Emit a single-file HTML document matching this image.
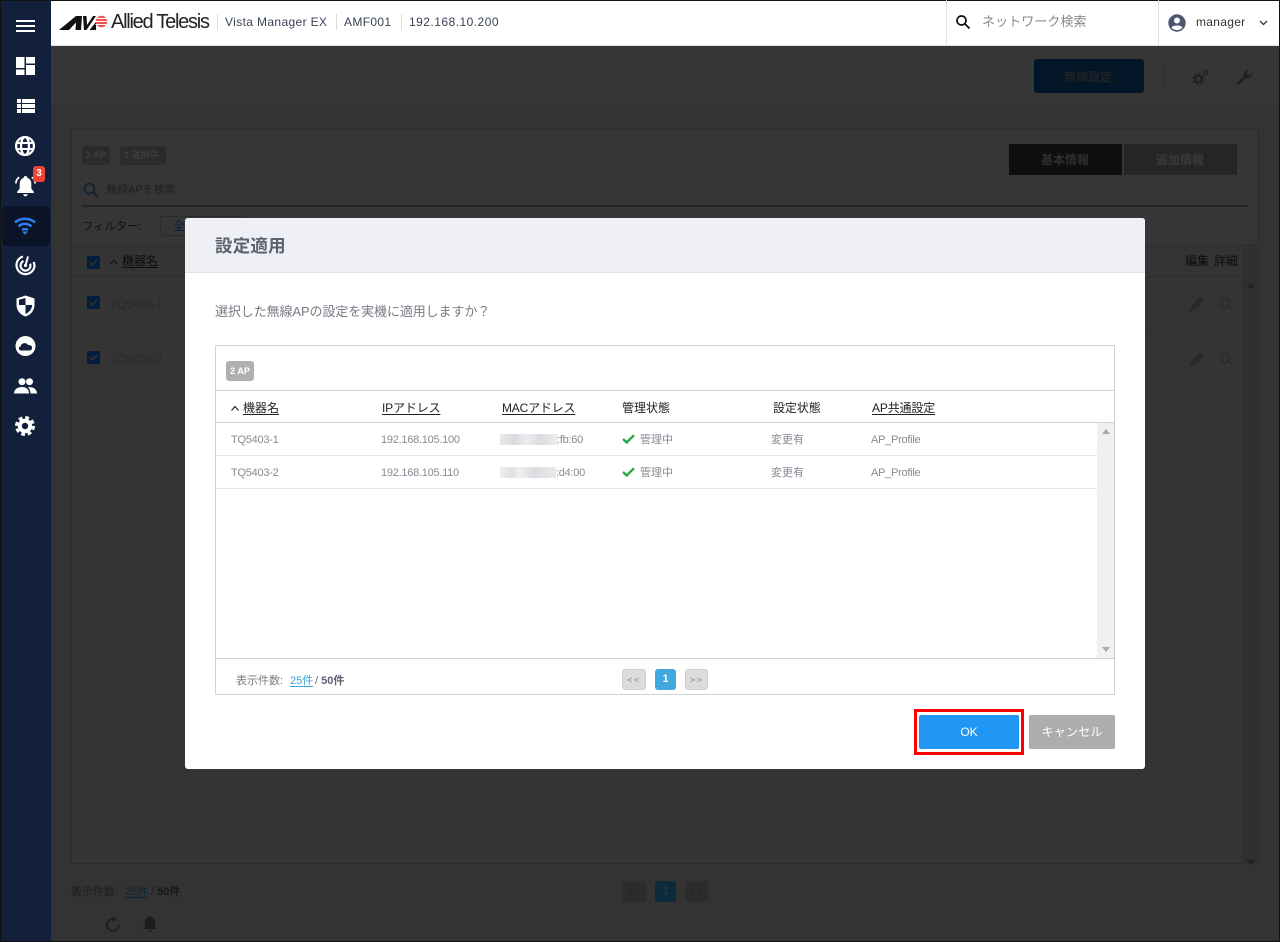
<!DOCTYPE html>
<html lang="ja"><head><meta charset="utf-8"><title>Vista Manager EX</title>
<style>
*{box-sizing:border-box}
html,body{margin:0;padding:0;width:1280px;height:942px;overflow:hidden;background:#333}
body{font-family:"Liberation Sans","Noto Sans CJK JP",sans-serif;position:relative;color:#222}
.a{position:absolute;white-space:nowrap}
.t{position:absolute;white-space:nowrap;line-height:16px}
svg{position:absolute;display:block;overflow:visible}
u{text-underline-offset:2px}
.d{font-size:11px;color:#858a94;letter-spacing:-.26px}
.c{font-size:11px;color:#858a94}
</style></head><body>

<!-- dark base -->
<div class="a" style="left:51px;top:46px;width:1229px;height:896px;background:#333"></div>
<div class="a" style="left:51px;top:46px;width:1229px;height:60px;background:#363636;border-bottom:1px solid #303030"></div>
<!-- background panel -->
<div class="a" style="left:71px;top:129px;width:1188px;height:735px;background:#343434;border:1px solid #2c2c2c"></div>
<div class="a" style="left:72px;top:130px;width:1186px;height:114px;background:#363636"></div>
<div class="a" style="left:72px;top:244px;width:1186px;height:143px;background:#343434;border-top:1px solid #2e2e2e"></div>
<div class="a" style="left:1243px;top:245px;width:16px;height:619px;background:#303030;border-left:1px solid #2c2c2c"></div>
<div class="a" style="left:72px;top:276px;width:1170px;height:1px;background:#2c2c2c"></div>
<div class="a" style="left:82px;top:331px;width:1150px;height:1px;background:#303030"></div>
<div class="a" style="left:82px;top:386px;width:1150px;height:1px;background:#313131"></div>
<div class="a" style="left:1034px;top:59px;width:110px;height:34px;background:#021628;border-radius:3px"></div>
<div class="t" style="left:1064px;top:69px;font-size:12px;color:#222;font-weight:700">無線設定</div>
<div class="a" style="left:1164px;top:59px;width:1px;height:34px;background:#303030"></div>
<svg style="left:1192px;top:68px" width="18" height="18" viewBox="0 0 18 18"><circle cx="6.500" cy="11" r="3.300" fill="none" stroke="#222" stroke-width="2.400"/><circle cx="6.500" cy="11" r="5.300" fill="none" stroke="#222" stroke-width="1.800" stroke-dasharray="2 2.160"/><circle cx="13.500" cy="4.500" r="2" fill="none" stroke="#222" stroke-width="1.600"/></svg>
<svg style="left:1235px;top:68px" width="18" height="18" viewBox="0 0 18 18"><path d="M1.500 15.500 9 8C8 5 10 1.500 14.500 1.500L11.500 4.500 13 7 15.500 7.500 17 4.500C17.500 9 13.500 11 10.500 10L3.500 17.200Z" fill="#1f1f1f"/></svg>
<div class="a" style="left:82px;top:146px;width:28px;height:19px;background:#2b2b2b;border-radius:3px"></div>
<div class="t" style="left:86px;top:147px;font-size:9px;color:#3d3d3d;font-weight:700">2 AP</div>
<div class="a" style="left:120px;top:146px;width:46px;height:19px;background:#2b2b2b;border-radius:3px"></div>
<div class="t" style="left:124px;top:147px;font-size:9px;color:#3d3d3d;font-weight:700">2 選択中</div>
<div class="a" style="left:1009px;top:144px;width:113px;height:31px;background:#100f0d"></div>
<div class="t" style="left:1041px;top:152px;font-size:12px;color:#2f2f2f;font-weight:700">基本情報</div>
<div class="a" style="left:1124px;top:144px;width:113px;height:31px;background:#252525"></div>
<div class="t" style="left:1156px;top:152px;font-size:12px;color:#3a3a3a;font-weight:700">追加情報</div>
<svg style="left:83px;top:182px" width="16" height="16" viewBox="0 0 16 16"><circle cx="6.500" cy="6.500" r="5" fill="none" stroke="#142230" stroke-width="1.800"/><path d="M10.500 10.500 15 15" stroke="#142230" stroke-width="2"/></svg>
<div class="t" style="left:106px;top:182px;font-size:11px;color:#1f1f1f">無線APを検索</div>
<div class="a" style="left:82px;top:205px;width:1166px;height:2px;background:#212629"></div>
<div class="t" style="left:82px;top:219px;font-size:11.500px;color:#111;letter-spacing:-.2px">フィルター:</div>
<div class="a" style="left:160px;top:216px;width:84px;height:20px;border:1px solid #2b2b2b;border-radius:3px"></div>
<div class="t" style="left:173px;top:218px;font-size:12px;color:#08243a">全</div>
<div class="a" style="left:87px;top:256px;width:13px;height:13px;background:#031e3c;border-radius:2px"></div>
<svg style="left:87px;top:256px" width="13" height="13" viewBox="0 0 13 13"><path d="M3 6.500 5.500 9 10 4" fill="none" stroke="#333" stroke-width="1.600"/></svg>
<svg style="left:110px;top:258px" width="8" height="8" viewBox="0 0 8 8"><path d="M.5 6.500 4 2 7.500 6.500" fill="none" stroke="#111" stroke-width="1.100"/></svg>
<div class="t" style="left:122px;top:253px;font-size:12px;color:#0d0d0d"><u>機器名</u></div>
<div class="t" style="left:1185px;top:253px;font-size:12px;color:#0d0d0d">編集</div>
<div class="t" style="left:1214px;top:253px;font-size:12px;color:#0d0d0d">詳細</div>
<div class="a" style="left:87px;top:296px;width:13px;height:13px;background:#031e3c;border-radius:2px"></div>
<svg style="left:87px;top:296px" width="13" height="13" viewBox="0 0 13 13"><path d="M3 6.500 5.500 9 10 4" fill="none" stroke="#333" stroke-width="1.600"/></svg>
<div class="t" style="left:110px;top:296px;font-size:12px;color:#2a2a2a;letter-spacing:-.2px">TQ5403-1</div>
<div class="a" style="left:87px;top:351px;width:13px;height:13px;background:#031e3c;border-radius:2px"></div>
<svg style="left:87px;top:351px" width="13" height="13" viewBox="0 0 13 13"><path d="M3 6.500 5.500 9 10 4" fill="none" stroke="#333" stroke-width="1.600"/></svg>
<div class="t" style="left:110px;top:351px;font-size:12px;color:#2a2a2a;letter-spacing:-.2px">TQ5403-2</div>
<svg style="left:1189px;top:296px" width="16" height="16" viewBox="0 0 16 16"><path d="M0 16 1.500 10.500 11.500 .5 15.500 4.500 5.500 14.500Z" fill="#2a2a2a"/></svg>
<svg style="left:1220px;top:298px" width="13" height="13" viewBox="0 0 13 13"><circle cx="5.300" cy="5.300" r="4.300" fill="none" stroke="#2a2a2a" stroke-width="1.400"/><path d="M8.500 8.500 12.500 12.500" stroke="#2a2a2a" stroke-width="1.600"/></svg>
<svg style="left:1189px;top:351px" width="16" height="16" viewBox="0 0 16 16"><path d="M0 16 1.500 10.500 11.500 .5 15.500 4.500 5.500 14.500Z" fill="#2a2a2a"/></svg>
<svg style="left:1220px;top:353px" width="13" height="13" viewBox="0 0 13 13"><circle cx="5.300" cy="5.300" r="4.300" fill="none" stroke="#2a2a2a" stroke-width="1.400"/><path d="M8.500 8.500 12.500 12.500" stroke="#2a2a2a" stroke-width="1.600"/></svg>
<svg style="left:1246px;top:283px" width="9" height="5" viewBox="0 0 9 5"><path d="M0 5 4.500 0 9 5Z" fill="#222"/></svg>
<svg style="left:1246px;top:860px" width="9" height="5" viewBox="0 0 9 5"><path d="M0 0 4.500 5 9 0Z" fill="#222"/></svg>
<div class="t" style="left:71px;top:884px;font-size:11px;color:#1d1d1d">表示件数:</div>
<div class="t" style="left:125px;top:884px;font-size:11px;color:#0a2634"><u>25件</u></div>
<div class="t" style="left:151px;top:884px;font-size:11px;color:#181818">/ <b>50件</b></div>
<div class="a" style="left:622px;top:881px;width:24px;height:21px;background:#2c2c2c;border-radius:3px;font-size:9px;line-height:21px;text-align:center;color:#202020;letter-spacing:1px">&lt;&lt;</div>
<div class="a" style="left:655px;top:881px;width:21px;height:21px;background:#0c2c3c;border-radius:3px;font-size:11px;font-weight:700;line-height:21px;text-align:center;color:#333">1</div>
<div class="a" style="left:685px;top:881px;width:23px;height:21px;background:#2c2c2c;border-radius:3px;font-size:9px;line-height:21px;text-align:center;color:#202020;letter-spacing:1px">&gt;&gt;</div>
<svg style="left:105px;top:916px" width="16" height="16" viewBox="0 0 16 16"><path d="M8.500 2.800A6 6 0 1 0 14 8.500" fill="none" stroke="#1d1d1d" stroke-width="1.700"/><path d="M7.500 0 12 3 7.500 6Z" fill="#1d1d1d"/></svg>
<svg style="left:143px;top:916px" width="14" height="16" viewBox="0 0 14 16"><path d="M7 0C9 0 8.500 1 9 1.500 11 2.500 12 4 12 7V10.500L14 12.500V13H0V12.500L2 10.500V7C2 4 3 2.500 5 1.500 5.500 1 5 0 7 0ZM5 14H9C9 16 5 16 5 14Z" fill="#1d1d1d"/></svg>

<!-- sidebar -->
<div class="a" style="left:0;top:0;width:51px;height:942px;background:#12203c"></div>
<div class="a" style="left:2px;top:206px;width:48px;height:40px;background:#0b1426;border-radius:4px"></div>
<div class="a" style="left:16px;top:20px;width:19px;height:2px;background:#fff"></div>
<div class="a" style="left:16px;top:25px;width:19px;height:2px;background:#fff"></div>
<div class="a" style="left:16px;top:30px;width:19px;height:2px;background:#fff"></div>
<svg style="left:16px;top:57px" width="19" height="18" viewBox="0 0 19 18" fill="#fff"><rect width="8.500" height="11"/><rect x="10" width="9" height="6.500"/><rect x="10" y="8" width="9" height="10"/><rect y="12.500" width="8.500" height="5.500"/></svg>
<svg style="left:17px;top:99px" width="18" height="14" viewBox="0 0 18 14" fill="#fff"><rect width="4" height="4"/><rect x="5" width="13" height="4"/><rect y="5" width="4" height="4"/><rect x="5" y="5" width="13" height="4"/><rect y="10" width="4" height="4"/><rect x="5" y="10" width="13" height="4"/></svg>
<svg style="left:15px;top:136px" width="20" height="20" viewBox="0 0 20 20" fill="none" stroke="#fff" stroke-width="2.300"><circle cx="10" cy="10" r="8.900"/><ellipse cx="10" cy="10" rx="4" ry="9"/><path d="M1.500 7H18.500M1.500 13H18.500" stroke-width="1.900"/></svg>
<svg style="left:15px;top:175px" width="21" height="22" viewBox="0 0 21 22"><path d="M10.500 1C12 1 12 2.200 12.300 2.800 15.500 4 16.300 6.500 16.300 9V13.500L18.800 16.800V18H2.200V16.800L4.700 13.500V9C4.700 6.500 5.500 4 8.700 2.800 9 2.200 9 1 10.500 1ZM8.300 19.200H12.700C12.700 22 8.300 22 8.300 19.200Z" fill="#fff"/><path d="M4.200 2.200C2 3.800 1 6 .8 8.500M16.800 2.200C19 3.800 20 6 20.200 8.500" fill="none" stroke="#fff" stroke-width="1.700"/></svg>
<div class="a" style="left:33px;top:166px;width:12px;height:16px;background:#f44336;border-radius:3px;color:#fff;font-size:10px;font-weight:700;line-height:16px;text-align:center">3</div>
<svg style="left:14px;top:217px" width="22" height="18" viewBox="0 0 22 18" fill="none" stroke="#2d7df0" stroke-width="2.400"><path d="M1 5.500C6.500 .5 15.500 .5 21 5.500"/><path d="M4.500 9.500C8 6 14 6 17.500 9.500"/><path d="M8 13C9.500 11.700 12.500 11.700 14 13" /><path d="M9.200 15 11 17 12.800 15Z" fill="#2d7df0" stroke-width="1"/></svg>
<svg style="left:15px;top:255px" width="21" height="21" viewBox="0 0 21 21" fill="none" stroke="#fff" stroke-width="2.200"><path d="M8 1.500A9 9 0 1 0 19.500 10.500C19.500 9 19 8 18.500 7"/><path d="M8.500 6A5 5 0 1 0 15.500 10.500C15.500 9.800 15.300 9.300 15 8.700"/><circle cx="10.500" cy="10.500" r="1.600" fill="#fff" stroke="none"/><path d="M10.500 10.500 13 1.500" stroke-width="2"/></svg>
<svg style="left:16px;top:295px" width="19" height="22" viewBox="0 0 19 22"><path d="M9.500 .5 18.500 3.500V10C18.500 15.500 14.500 20 9.500 21.500 4.500 20 .5 15.500 .5 10V3.500Z" fill="#fff"/><path d="M9.500 3V10H3V4.800ZM9.500 10H16.200C16 14 13 17.500 9.500 19Z" fill="#12203c"/></svg>
<svg style="left:15px;top:336px" width="21" height="20" viewBox="0 0 21 20"><circle cx="10.500" cy="10" r="10" fill="#fff"/><path d="M6 14.500C3.500 14.500 3 10.800 5.800 10.200 6 7 11.500 5.800 13 9 16 8.800 17.500 10.500 17 12.500 16.700 13.700 15.800 14.500 14.500 14.500Z" fill="#12203c"/></svg>
<svg style="left:14px;top:378px" width="23" height="16" viewBox="0 0 23 16" fill="#fff"><circle cx="8" cy="3.700" r="3.500"/><circle cx="15.500" cy="3.700" r="3.500"/><path d="M0 15.500C0 11 4 9 8 9S15 11 15 15.500ZM16.500 15.500C16.500 13 15.500 10.800 14 9.300 18 8.500 23 10.500 23 15.500Z"/></svg>
<svg style="left:15px;top:416px" width="20" height="20" viewBox="0 0 20 20"><circle cx="10" cy="10" r="5.200" fill="none" stroke="#fff" stroke-width="4"/><circle cx="10" cy="10" r="8.300" fill="none" stroke="#fff" stroke-width="3.400" stroke-dasharray="3.700 2.820"/></svg>

<!-- top bar -->
<div class="a" style="left:51px;top:0;width:1229px;height:46px;background:#fff;border-bottom:1px solid #e0e0e0"></div>
<div class="a" style="left:0;top:0;width:1280px;height:1px;background:#111"></div>
<svg style="left:58px;top:15px" width="50" height="15" viewBox="0 0 50 15"><path d="M1 15 18 1H24L23 15H17.500L18 7.500 11 15Z" fill="#111"/><path d="M25 1H28.500L29 10 35 1H38L28.500 15H26Z" fill="#111"/><path d="M31.500 15 38 7V15Z" fill="#111"/><circle cx="43.500" cy="6.500" r="5.800" fill="#ef5350"/><path d="M37.500 3.500H50M37.500 6.500H50M37.500 9.500H50" stroke="#fff" stroke-width=".9"/></svg>
<div class="t" style="left:111px;top:10px;font-size:20px;line-height:24px;letter-spacing:-1.25px;color:#222;font-weight:400">Allied Telesis</div>
<div class="a" style="left:217px;top:14px;width:1px;height:16px;background:#ddd"></div>
<div class="t" style="left:225px;top:14px;font-size:12px;color:#3a4256;letter-spacing:.37px">Vista Manager EX</div>
<div class="a" style="left:336px;top:14px;width:1px;height:16px;background:#ddd"></div>
<div class="t" style="left:344px;top:14px;font-size:12px;color:#3a4256;letter-spacing:.35px">AMF001</div>
<div class="a" style="left:401px;top:14px;width:1px;height:16px;background:#ddd"></div>
<div class="t" style="left:409px;top:14px;font-size:12px;color:#3a4256;letter-spacing:.47px">192.168.10.200</div>
<div class="a" style="left:946px;top:0;width:1px;height:45px;background:#e0e0e0"></div>
<svg style="left:956px;top:15px" width="14" height="14" viewBox="0 0 14 14"><circle cx="5.500" cy="5.500" r="4.500" fill="none" stroke="#111" stroke-width="1.700"/><path d="M9 9 13.500 13.500" stroke="#111" stroke-width="1.900"/></svg>
<div class="t" style="left:982px;top:14px;font-size:13px;color:#888;letter-spacing:.08px">ネットワーク検索</div>
<div class="a" style="left:1158px;top:0;width:1px;height:45px;background:#e0e0e0"></div>
<svg style="left:1168px;top:14px" width="18" height="18" viewBox="0 0 18 18"><circle cx="9" cy="9" r="8.700" fill="#4c5670"/><circle cx="9" cy="6.500" r="3" fill="#fff"/><path d="M3.500 13.500C5 10.800 13 10.800 14.500 13.500 13 15.500 11 16 9 16S5 15.500 3.500 13.500Z" fill="#fff"/></svg>
<div class="t" style="left:1196px;top:14px;font-size:12px;color:#333;letter-spacing:.3px">manager</div>
<svg style="left:1259px;top:20px" width="9" height="6" viewBox="0 0 9 6"><path d="M1 1 4.500 4.500 8 1" fill="none" stroke="#333" stroke-width="1.300"/></svg>

<!-- modal -->
<div class="a" style="left:185px;top:218px;width:960px;height:551px;background:#fff;border-radius:3px"></div>
<div class="a" style="left:185px;top:218px;width:960px;height:55px;background:#eff0f5;border-bottom:1px solid #e2e2e4;border-radius:3px 3px 0 0"></div>
<div class="t" style="left:215px;top:237px;font-size:17.500px;line-height:18px;font-weight:700;color:#5d6270;letter-spacing:.2px">設定適用</div>
<div class="t" style="left:215px;top:304px;font-size:13px;color:#777b85;letter-spacing:-.1px">選択した無線APの設定を実機に適用しますか？</div>

<div class="a" style="left:215px;top:345px;width:900px;height:350px;border:1px solid #d2d2d2"></div>
<div class="a" style="left:226px;top:361px;width:28px;height:20px;background:#b0b0b0;border-radius:3px;color:#fff;font-size:9px;font-weight:700;line-height:20px;text-align:center">2 AP</div>
<div class="a" style="left:216px;top:390px;width:898px;height:1px;background:#d2d2d2"></div>
<div class="a" style="left:216px;top:422px;width:898px;height:1px;background:#d2d2d2"></div>
<svg style="left:231px;top:404px" width="8" height="8" viewBox="0 0 8 8"><path d="M.5 6.500 4 2.500 7.500 6.500" fill="none" stroke="#222" stroke-width="1.100"/></svg>
<div class="t" style="left:243px;top:400px;font-size:12px;color:#222"><u>機器名</u></div>
<div class="t" style="left:382px;top:400px;font-size:12px;color:#222;letter-spacing:-.15px"><u>IPアドレス</u></div>
<div class="t" style="left:502px;top:400px;font-size:12px;color:#222;letter-spacing:-.2px"><u>MACアドレス</u></div>
<div class="t" style="left:622px;top:400px;font-size:12px;color:#222">管理状態</div>
<div class="t" style="left:773px;top:400px;font-size:12px;color:#222;letter-spacing:-.1px">設定状態</div>
<div class="t" style="left:872px;top:400px;font-size:12px;color:#222;letter-spacing:-.15px"><u>AP共通設定</u></div>

<div class="a" style="left:216px;top:455px;width:881px;height:1px;background:#e3e6ea"></div>
<div class="a" style="left:216px;top:488px;width:881px;height:1px;background:#e3e6ea"></div>
<div class="t d" style="left:231px;top:432px">TQ5403-1</div>
<div class="t d" style="left:381px;top:432px">192.168.105.100</div>
<div class="a" style="left:500px;top:434px;width:58px;height:11px;background:linear-gradient(90deg,#e8e8ec,#d9d9de 25%,#ececf0 45%,#dcdce0 70%,#eeeeee)"></div>
<div class="t d" style="left:557px;top:432px">:fb:60</div>
<svg style="left:622px;top:434px" width="13" height="10" viewBox="0 0 13 10"><path d="M1 5 4.700 8.500 12 1.200" fill="none" stroke="#28a745" stroke-width="2.400"/></svg>
<div class="t c" style="left:640px;top:432px">管理中</div>
<div class="t c" style="left:771px;top:432px">変更有</div>
<div class="t d" style="left:871px;top:432px">AP_Profile</div>

<div class="t d" style="left:231px;top:465px">TQ5403-2</div>
<div class="t d" style="left:381px;top:465px">192.168.105.110</div>
<div class="a" style="left:500px;top:467px;width:56px;height:11px;background:linear-gradient(90deg,#eeeef0,#e0e0e4 22%,#f0f0f2 35%,#dcdce0 60%,#eaeaee)"></div>
<div class="t d" style="left:556px;top:465px">:d4:00</div>
<svg style="left:622px;top:467px" width="13" height="10" viewBox="0 0 13 10"><path d="M1 5 4.700 8.500 12 1.200" fill="none" stroke="#28a745" stroke-width="2.400"/></svg>
<div class="t c" style="left:640px;top:465px">管理中</div>
<div class="t c" style="left:771px;top:465px">変更有</div>
<div class="t d" style="left:871px;top:465px">AP_Profile</div>

<div class="a" style="left:1097px;top:423px;width:17px;height:235px;background:#f0f0f0"></div>
<svg style="left:1102px;top:429px" width="8" height="5" viewBox="0 0 8 5"><path d="M0 5 4 0 8 5Z" fill="#a8a8a8"/></svg>
<svg style="left:1102px;top:647px" width="8" height="5" viewBox="0 0 8 5"><path d="M0 0 4 5 8 0Z" fill="#a8a8a8"/></svg>
<div class="a" style="left:216px;top:658px;width:898px;height:1px;background:#d2d2d2"></div>

<div class="t" style="left:236px;top:673px;font-size:11px;color:#777b85">表示件数:</div>
<div class="t" style="left:290px;top:673px;font-size:11px;color:#3ba3d8"><u>25件</u></div>
<div class="t" style="left:315px;top:673px;font-size:11px;color:#5d6270">/ <b>50件</b></div>
<div class="a" style="left:622px;top:669px;width:24px;height:21px;background:#dcdcdc;border:1px solid #d0d0d0;border-radius:3px;font-size:9px;line-height:20px;text-align:center;color:#888;letter-spacing:1.500px">&lt;&lt;</div>
<div class="a" style="left:655px;top:669px;width:21px;height:21px;background:#41a9df;border-radius:3px;font-size:11px;font-weight:700;line-height:21px;text-align:center;color:#fff">1</div>
<div class="a" style="left:685px;top:669px;width:23px;height:21px;background:#dcdcdc;border:1px solid #d0d0d0;border-radius:3px;font-size:9px;line-height:20px;text-align:center;color:#888;letter-spacing:1.500px">&gt;&gt;</div>

<div class="a" style="left:914px;top:709px;width:110px;height:46px;border:3px solid #f00"></div>
<div class="a" style="left:919px;top:715px;width:100px;height:34px;background:#2196f3;border-radius:2px;color:#fff;font-size:12px;line-height:35px;text-align:center">OK</div>
<div class="a" style="left:1029px;top:715px;width:86px;height:34px;background:#adadad;border-radius:2px;color:#fff;font-size:12.200px;line-height:35px;text-align:center">キャンセル</div>

<!-- outer edge -->
<div class="a" style="left:0;top:0;width:1px;height:942px;background:#111"></div>
<div class="a" style="left:1279px;top:0;width:1px;height:942px;background:#111"></div>
<div class="a" style="left:0;top:941px;width:1280px;height:1px;background:#111"></div>
</body></html>
